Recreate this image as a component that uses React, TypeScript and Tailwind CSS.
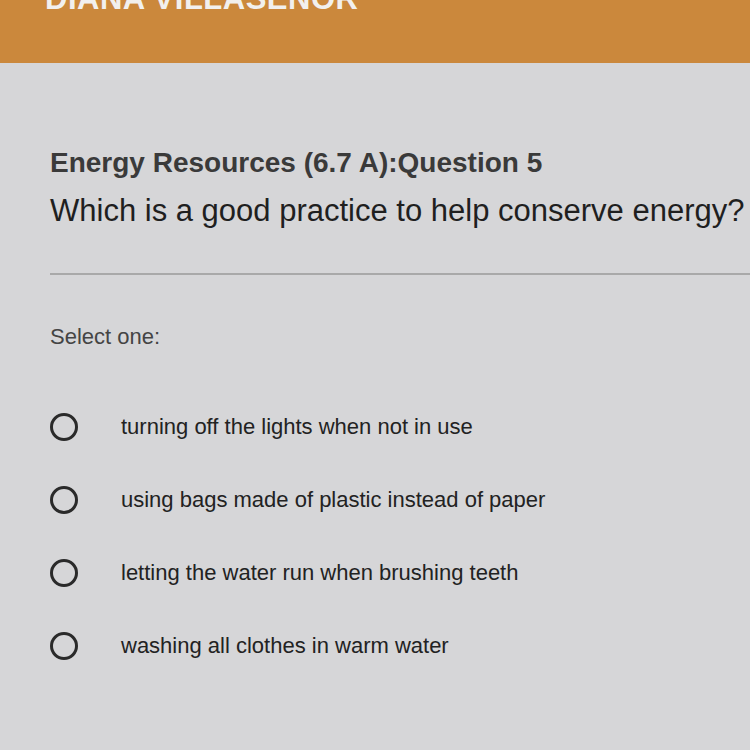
import React from "react";

const options = [
  "turning off the lights when not in use",
  "using bags made of plastic instead of paper",
  "letting the water run when brushing teeth",
  "washing all clothes in warm water",
];

export default function App() {
  return (
    <div
      className="w-[750px] h-[750px] overflow-hidden bg-[#d6d6d8] flex flex-col"
      style={{ fontFamily: '"Liberation Sans", Arial, sans-serif' }}
    >
      <div className="h-[63px] bg-[#cb883c] px-[45px] relative overflow-hidden shrink-0">
        <div className="absolute left-[45px] top-[-24px] text-[31px] font-bold text-[#f2f0ee] tracking-[0.5px]">
          DIANA VILLASEÑOR
        </div>
      </div>
      <div className="flex flex-col pl-[50px] pt-[82px]">
        <div className="text-[28px] font-bold text-[#3a3a3a] leading-[36px]">
          Energy Resources (6.7 A):Question 5
        </div>
        <div className="text-[31px] text-[#1f1f1f] leading-[40px] mt-[10px] whitespace-nowrap">
          Which is a good practice to help conserve energy?
        </div>
        <div className="h-[2px] bg-[#a9a9a9] mt-[42px]" />
        <div className="text-[22px] text-[#444] mt-[49px] leading-[26px]">
          Select one:
        </div>
        <div className="flex flex-col mt-[62px] gap-[44px]">
          {options.map((o) => (
            <div key={o} className="flex items-center h-[29px]">
              <div className="w-[28px] h-[28px] rounded-full border-[3px] border-[#2a2a2a] shrink-0" />
              <div className="ml-[43px] text-[22px] text-[#222] whitespace-nowrap">{o}</div>
            </div>
          ))}
        </div>
      </div>
    </div>
  );
}
